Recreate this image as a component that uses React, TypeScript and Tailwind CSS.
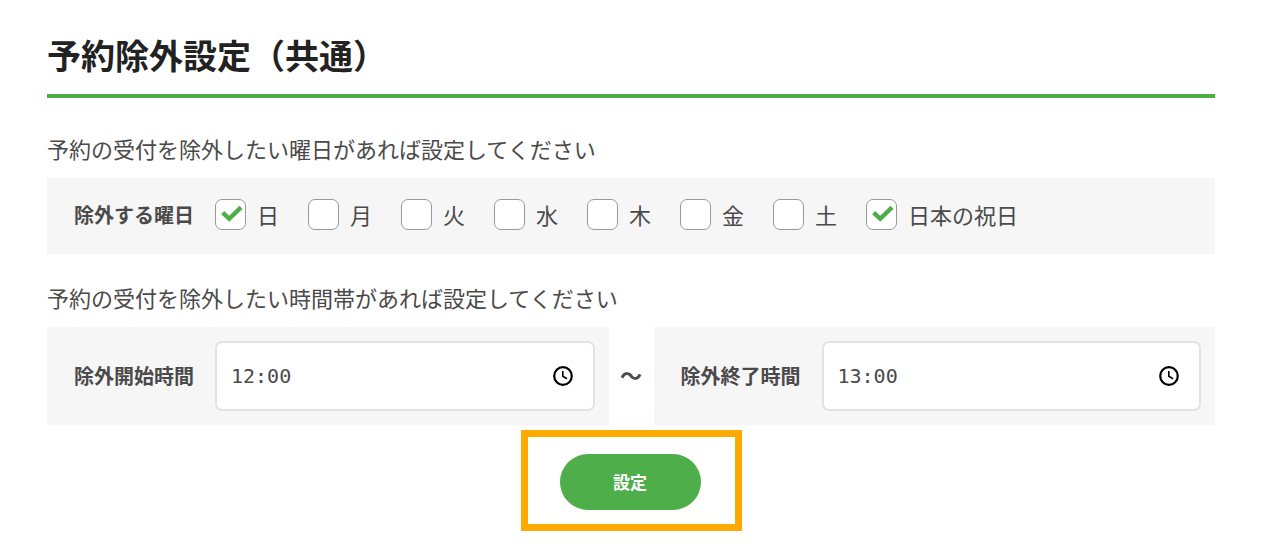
import { useState } from 'react';

const DAYS = ['日', '月', '火', '水', '木', '金', '土', '日本の祝日'];

interface DayCheckboxProps {
  label: string;
  checked: boolean;
  onToggle: () => void;
}

function DayCheckbox({ label, checked, onToggle }: DayCheckboxProps) {
  return (
    <label className="flex items-center gap-[11px] cursor-pointer">
      <span className="grid size-[31px]">
        <input
          type="checkbox"
          checked={checked}
          onChange={onToggle}
          className="col-start-1 row-start-1 size-[31px] appearance-none rounded-[7px] border border-[#999] bg-white"
        />
        {checked && (
          <svg viewBox="0 0 31 31" className="col-start-1 row-start-1 size-[31px] pointer-events-none" fill="none">
            <path d="M7.7 13.6 L14.2 19.8 L26 8.3" stroke="#4eae4a" strokeWidth="4.4" />
          </svg>
        )}
      </span>
      <span>{label}</span>
    </label>
  );
}

interface TimeFieldProps {
  id: string;
  label: string;
  value: string;
  onChange: (value: string) => void;
}

function TimeField({ id, label, value, onChange }: TimeFieldProps) {
  return (
    <div className="flex flex-1 min-w-0 items-center bg-[#f6f6f6] py-[14px] pl-[27px] pr-[14px]">
      <label htmlFor={id} className="w-[141px] shrink-0 text-[20px] font-bold">
        {label}
      </label>
      <div className="flex flex-1 min-w-0 h-[70px] items-center rounded-[7px] border-2 border-[#e2e2e2] bg-white pl-[14px] pr-5">
        <input
          id={id}
          type="text"
          inputMode="numeric"
          value={value}
          onChange={(e) => onChange(e.target.value)}
          className="flex-1 min-w-0 bg-transparent font-['DejaVu_Sans_Mono',monospace] text-[20px] outline-none"
        />
        <svg viewBox="0 0 20 20" className="size-5 shrink-0 text-black" fill="none" stroke="currentColor">
          <circle cx="10" cy="10" r="8.8" strokeWidth="2.2" />
          <path d="M9.8 5 V10.3 L14 12.8" strokeWidth="1.6" />
        </svg>
      </div>
    </div>
  );
}

export default function App() {
  const [excluded, setExcluded] = useState<string[]>(['日', '日本の祝日']);
  const [start, setStart] = useState('12:00');
  const [end, setEnd] = useState('13:00');

  const toggleDay = (day: string) => {
    setExcluded((prev) => (prev.includes(day) ? prev.filter((d) => d !== day) : [...prev, day]));
  };

  return (
    <main
      lang="ja"
      className="min-h-screen bg-white pt-[30px] pb-4 pl-[47px] pr-[49px] font-['Noto_Sans_CJK_JP',sans-serif] text-[22px] text-[#4a4a4a]"
    >
      <h1 className="border-b-4 border-[#4eae4a] pb-[14px] text-[34px] leading-[50px] font-bold text-[#222]">
        予約除外設定（共通）
      </h1>

      <form onSubmit={(e) => e.preventDefault()}>
        <p className="mt-[34px] mb-[14px] leading-8">予約の受付を除外したい曜日があれば設定してください</p>
        <div
          role="group"
          aria-labelledby="days-label"
          className="flex items-center bg-[#f6f6f6] pt-[21px] pb-6 pl-[27px] pr-[14px] leading-[31px]"
        >
          <span id="days-label" className="w-[141px] shrink-0 text-[20px] font-bold">
            除外する曜日
          </span>
          <div className="flex flex-wrap gap-x-[29px] gap-y-3">
            {DAYS.map((day) => (
              <DayCheckbox key={day} label={day} checked={excluded.includes(day)} onToggle={() => toggleDay(day)} />
            ))}
          </div>
        </div>

        <p className="mt-[27px] mb-[14px] leading-8">予約の受付を除外したい時間帯があれば設定してください</p>
        <div className="flex items-center">
          <TimeField id="start-time" label="除外開始時間" value={start} onChange={setStart} />
          <span className="w-[45px] pb-1 text-center font-bold">〜</span>
          <TimeField id="end-time" label="除外終了時間" value={end} onChange={setEnd} />
        </div>

        <div className="mx-auto mt-[5px] w-fit border-[7px] border-[#ffaa00] pl-8 pr-[34px] pt-[17px] pb-[14px]">
          <button
            type="submit"
            className="block h-14 w-[141px] cursor-pointer rounded-full bg-[#4eae4a] text-[17px] font-bold text-white"
          >
            設定
          </button>
        </div>
      </form>
    </main>
  );
}
